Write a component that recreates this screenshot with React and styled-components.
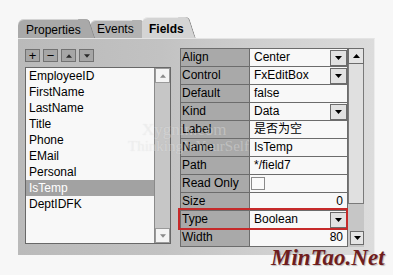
import React from "react"
import styled, { createGlobalStyle } from "styled-components"

const GlobalStyle = createGlobalStyle`
  body {
    margin: 0;
    background: #f7f7f7;
    font-family: "Liberation Sans", Arial, sans-serif;
  }
`

const Page = styled.div`
  position: relative;
  width: 393px;
  height: 275px;
  box-sizing: border-box;
  padding: 17px 0 0 18px;
  overflow: hidden;
`

const TabStrip = styled.div`
  display: flex;
  align-items: flex-end;
  height: 21px;
`

const Tab = styled.div`
  position: relative;
  z-index: ${p => p.$z};
  width: ${p => p.$w}px;
  height: ${p => p.$h}px;
  margin-left: ${p => p.$gap}px;
  box-sizing: border-box;
  padding: ${p => p.$ty}px 0 0 ${p => p.$pad}px;
  background: ${p => p.$bg};
  border-top-left-radius: 6px;
  box-shadow: inset 0 1px 0 rgba(255, 255, 255, 0.5);
  font-size: 12px;
  line-height: 12px;
  font-weight: ${p => (p.$active ? 700 : 400)};
  color: #000;
  white-space: nowrap;

  &::after {
    content: "";
    position: absolute;
    top: 0;
    left: calc(100% - 8px);
    width: 10px;
    height: 100%;
    background: inherit;
    border-top-right-radius: 4px;
    border-right: 1px solid #8a8a8a;
    transform: skewX(18deg);
    transform-origin: top left;
    z-index: -1;
  }
`

const Panel = styled.div`
  display: flex;
  gap: 9px;
  width: 357px;
  height: 217px;
  box-sizing: border-box;
  padding: 9px 10px 0 7px;
  background: linear-gradient(to right, #bababa, #c2c2c2 40%, #d2d2d2 75%, #dcdcdc);
  border-top: 1px solid #e4e4e4;
  border-right: 1px solid #ececec;
`

const LeftCol = styled.div`
  display: flex;
  flex-direction: column;
  width: 146px;
  padding-top: 1px;
`

const ToolRow = styled.div`
  display: flex;
  gap: 3px;
  height: 13px;
  margin-bottom: 5px;
`

const ToolBtn = styled.div`
  display: flex;
  align-items: center;
  justify-content: center;
  width: 15px;
  height: 13px;
  box-sizing: border-box;
  background: #a6a6a6;
  border: 1px solid #727272;
  font-size: 13px;
  line-height: 1;
  color: #000;
`

const ListBox = styled.div`
  display: flex;
  height: 177px;
  box-sizing: border-box;
  border: 1px solid #686868;
  background: #f8f8f8;
`

const List = styled.div`
  flex: 1;
`

const Item = styled.div`
  height: 16px;
  padding-left: 3px;
  font-size: 12px;
  line-height: 16px;
  color: ${p => (p.$selected ? "#fff" : "#000")};
  background: ${p => (p.$selected ? "#a2a2a2" : "transparent")};
`

const ListScroll = styled.div`
  display: flex;
  flex-direction: column;
  justify-content: space-between;
  width: 15px;
  background: #c6c6c6;
  border-left: 1px solid #8a8a8a;
`

const ListScrollBtn = styled.div`
  display: flex;
  align-items: center;
  justify-content: center;
  height: 15px;
  box-sizing: border-box;
  background: #f4f4f4;
  border: 1px solid #9a9a9a;
`

const GridArea = styled.div`
  display: flex;
  height: 199px;
`

const Grid = styled.div`
  width: 168px;
  box-sizing: border-box;
  border-top: 1px solid #6c6c6c;
  border-left: 1px solid #6c6c6c;
  border-right: 1px solid #6c6c6c;
`

const Row = styled.div`
  position: relative;
  display: flex;
  height: 18px;
  box-sizing: border-box;
  border-bottom: 1px solid #6c6c6c;

  ${p =>
    p.$marked &&
    `&::before {
      content: "";
      position: absolute;
      inset: -3px -1px -2px -3px;
      border: 2px solid #c62a2a;
      pointer-events: none;
      z-index: 2;
    }`}
`

const Label = styled.div`
  width: 69px;
  flex-shrink: 0;
  padding-left: 1px;
  box-sizing: border-box;
  background: #a9a9a9;
  border-right: 1px solid #6c6c6c;
  font-size: 12px;
  line-height: 17px;
  color: #000;
  white-space: nowrap;
`

const Value = styled.div`
  flex: 1;
  display: flex;
  align-items: center;
  justify-content: ${p => (p.$right ? "flex-end" : "space-between")};
  padding: 0 ${p => (p.$right ? 4 : 0)}px 0 4px;
  background: #f8f8f8;
  font-family: "Liberation Sans", "Noto Sans CJK SC", sans-serif;
  font-size: 12px;
  line-height: 17px;
  color: #000;
`

const DropBtn = styled.div`
  display: flex;
  align-items: center;
  justify-content: center;
  width: 17px;
  height: 16px;
  box-sizing: border-box;
  background: #e2e2e2;
  border: 1px solid #6c6c6c;
`

const Check = styled.div`
  width: 14px;
  height: 13px;
  margin-left: -3px;
  box-sizing: border-box;
  background: #fafafa;
  border: 1px solid #8a8a8a;
`

const GridScroll = styled.div`
  display: flex;
  flex-direction: column;
  width: 16px;
  background: #c6c6c6;
`

const ScrollBtn = styled.div`
  display: flex;
  align-items: center;
  justify-content: center;
  width: ${p => p.$size}px;
  height: ${p => p.$size}px;
  margin: ${p => p.$margin || 0};
  box-sizing: border-box;
  background: #e4e4e4;
  border: 1px solid #6c6c6c;
`

const Thumb = styled.div`
  height: 140px;
  box-sizing: border-box;
  background: #e0e0e0;
  border-left: 1px solid #7a7a7a;
  border-right: 1px solid #7a7a7a;
  border-bottom: 1px solid #7a7a7a;
`

const Track = styled.div`
  flex: 1;
`

const Ghost = styled.div`
  position: absolute;
  left: ${p => p.$x}px;
  top: ${p => p.$y}px;
  font-family: "Liberation Serif", serif;
  font-size: ${p => p.$size}px;
  line-height: 1;
  color: rgba(255, 255, 255, 0.3);
  text-shadow: 0 0 1px rgba(150, 150, 150, 0.2);
  white-space: nowrap;
  pointer-events: none;
`

const Brand = styled.div`
  position: absolute;
  left: 271px;
  top: 246px;
  font-family: "Liberation Serif", "Times New Roman", serif;
  font-style: italic;
  font-weight: 700;
  font-size: 23px;
  line-height: 1;
  color: #6f1d1d;
  text-shadow: 1px 1px 1px rgba(0, 0, 0, 0.25);
  white-space: nowrap;
`

const Arrow = ({ dir = "down", color = "#000", w = 7, h = 4 }) => (
  <svg width={w} height={h} viewBox="0 0 7 4" style={{ display: "block" }}>
    <polygon points={dir === "down" ? "0,0 7,0 3.5,4" : "0,4 7,4 3.5,0"} fill={color} />
  </svg>
)

const fields = ["EmployeeID", "FirstName", "LastName", "Title", "Phone", "EMail", "Personal", "IsTemp", "DeptIDFK"]

const props = [
  { name: "Align", value: "Center", drop: true },
  { name: "Control", value: "FxEditBox", drop: true },
  { name: "Default", value: "false" },
  { name: "Kind", value: "Data", drop: true },
  { name: "Label", value: "是否为空" },
  { name: "Name", value: "IsTemp" },
  { name: "Path", value: "*/field7" },
  { name: "Read Only", check: true },
  { name: "Size", value: "0", right: true },
  { name: "Type", value: "Boolean", drop: true, marked: true },
  { name: "Width", value: "80", right: true },
]

export default function App() {
  return (
    <Page>
      <GlobalStyle />
      <TabStrip>
        <Tab $z={2} $w={68} $h={19} $gap={0} $pad={8} $ty={5} $bg="#a9a9a9">
          Properties
        </Tab>
        <Tab $z={1} $w={50} $h={18} $gap={4} $pad={7} $ty={3} $bg="#b3b3b3">
          Events
        </Tab>
        <Tab $z={3} $w={44} $h={21} $gap={2} $pad={7} $ty={6} $bg="#d4d4d4" $active>
          Fields
        </Tab>
      </TabStrip>

      <Panel>
        <LeftCol>
          <ToolRow>
            <ToolBtn>+</ToolBtn>
            <ToolBtn>−</ToolBtn>
            <ToolBtn>
              <Arrow dir="up" color="#2a2a2a" w={6} h={4} />
            </ToolBtn>
            <ToolBtn>
              <Arrow dir="down" color="#2a2a2a" w={6} h={4} />
            </ToolBtn>
          </ToolRow>
          <ListBox>
            <List>
              {fields.map(f => (
                <Item key={f} $selected={f === "IsTemp"}>
                  {f}
                </Item>
              ))}
            </List>
            <ListScroll>
              <ListScrollBtn>
                <Arrow dir="up" color="#8a8a8a" w={6} h={4} />
              </ListScrollBtn>
              <ListScrollBtn>
                <Arrow dir="down" color="#8a8a8a" w={6} h={4} />
              </ListScrollBtn>
            </ListScroll>
          </ListBox>
        </LeftCol>

        <GridArea>
          <Grid>
            {props.map(p => (
              <Row key={p.name} $marked={p.marked}>
                <Label>{p.name}</Label>
                <Value $right={p.right}>
                  {p.check ? <Check /> : <span>{p.value}</span>}
                  {p.drop && (
                    <DropBtn>
                      <Arrow />
                    </DropBtn>
                  )}
                </Value>
              </Row>
            ))}
          </Grid>
          <GridScroll>
            <ScrollBtn $size={16}>
              <Arrow dir="up" />
            </ScrollBtn>
            <Thumb />
            <Track />
            <ScrollBtn $size={14} $margin="0 0 2px 2px">
              <Arrow />
            </ScrollBtn>
          </GridScroll>
        </GridArea>
      </Panel>

      <Ghost $x={142} $y={121} $size={17}>
        Xygnin.com
      </Ghost>
      <Ghost $x={128} $y={139} $size={15}>
        ThinkingInYourSelf
      </Ghost>
      <Brand>MinTao.Net</Brand>
    </Page>
  )
}
